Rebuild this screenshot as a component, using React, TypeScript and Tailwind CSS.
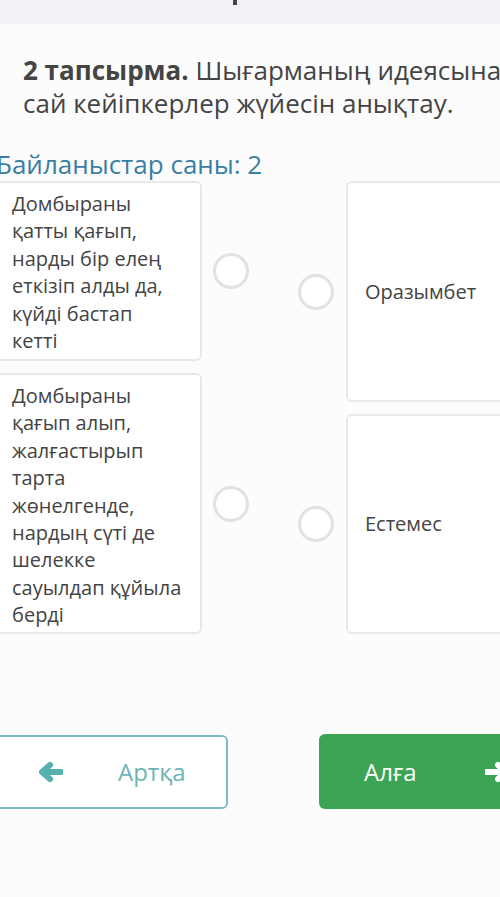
export default function App() {
  const font = { fontFamily: '"Open Sans", "Noto Sans", sans-serif' }
  const left = [
    { lines: ['Домбыраны қатты қағып, нарды бір елең еткізіп алды да, күйді бастап', 'кетті'], h: 'h-[180px]' },
    { lines: ['Домбыраны қағып алып, жалғастырып тарта жөнелгенде, нардың сүті де шелекке сауылдап құйыла берді'], h: 'h-[261px]' },
  ]
  return (
    <div className="w-[500px] h-[897px] overflow-hidden bg-[#fcfcfc] text-[#444]" style={font}>
      <div className="h-[24px] bg-[#f1f2f6] flex justify-center">
        <div className="ml-[-30px] w-[4px] h-[5px] bg-[#444]" />
      </div>

      <div className="pl-[23px] pt-[30px] text-[26px] leading-[33px] whitespace-nowrap">
        <div>
          <span className="font-bold">2 тапсырма.</span> Шығарманың идеясына
        </div>
        <div>сай кейіпкерлер жүйесін анықтау.</div>
      </div>

      <div className="ml-[-4px] mt-[29px] text-[26px] leading-[30px] text-[#3a7fa3] whitespace-nowrap">
        Байланыстар саны: 2
      </div>

      <div className="flex ml-[-8px] mt-[2px]">
        <div className="flex flex-col gap-3 shrink-0">
          {left.map((item) => (
            <div key={item.lines[0]} className="flex items-center">
              <div className={`w-[210px] shrink-0 ${item.h} bg-white border-2 border-[#e8e8e8] rounded-md pl-[18px] pr-[13px] pt-[7px] text-[20px] leading-[27.4px]`}>
                {item.lines.map((l) => (
                  <div key={l}>{l}</div>
                ))}
              </div>
              <div className="ml-[11px] shrink-0 w-[36px] h-[36px] rounded-full border-[3px] border-[#e2e2e2] bg-white" />
            </div>
          ))}
        </div>

        <div className="ml-[49px] flex flex-col gap-3 shrink-0">
          {[
            ['Оразымбет', 'h-[221px]'],
            ['Естемес', 'h-[220px]'],
          ].map(([text, h]) => (
            <div key={text} className="flex items-center">
              <div className="w-[36px] shrink-0 h-[36px] rounded-full border-[3px] border-[#e2e2e2] bg-white" />
              <div className={`ml-[12px] shrink-0 w-[180px] ${h} bg-white border-2 border-[#e8e8e8] rounded-md pl-[17px] flex items-center text-[20px]`}>
                {text}
              </div>
            </div>
          ))}
        </div>
      </div>

      <div className="flex mt-[101px] ml-[-10px]">
        <div className="w-[238px] shrink-0 h-[74px] border-2 border-[#7bbcbf] rounded-md bg-white flex items-center text-[#6cb5b5] text-[24px]">
          <svg width="26" height="22" viewBox="0 0 26 22" className="ml-[45px] shrink-0">
            <path d="M24 11H8M13 4L5 11L13 18" fill="none" stroke="#55b1ae" strokeWidth="6" strokeLinecap="round" strokeLinejoin="round" />
          </svg>
          <span className="ml-[55px]">Артқа</span>
        </div>
        <div className="ml-[91px] shrink-0 w-[200px] h-[75px] mt-[-1px] rounded-md bg-[#3ca453] flex items-center text-white text-[24px]">
          <span className="ml-[45px]">Алға</span>
          <svg width="26" height="22" viewBox="0 0 26 22" className="ml-[68px] shrink-0">
            <path d="M2 11H18M13 4L21 11L13 18" fill="none" stroke="#fff" strokeWidth="6" strokeLinecap="round" strokeLinejoin="round" />
          </svg>
        </div>
      </div>
    </div>
  )
}
